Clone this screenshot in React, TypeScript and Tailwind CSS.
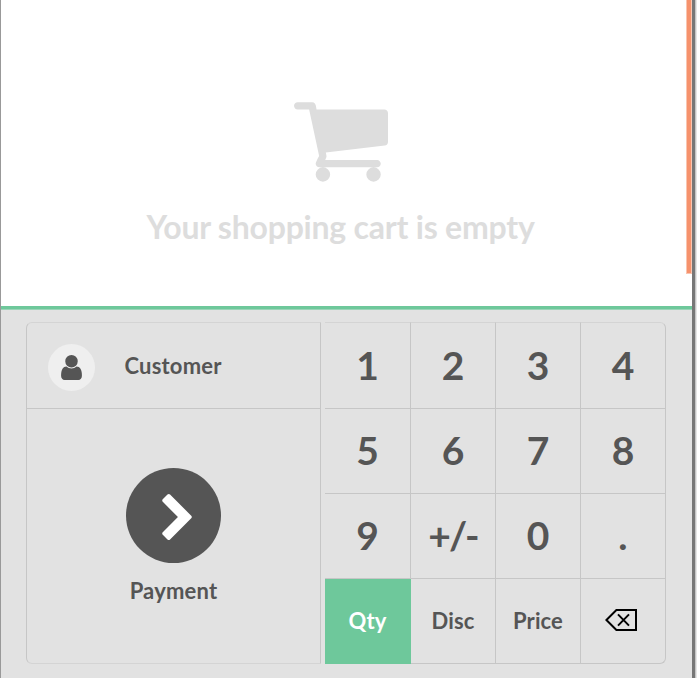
import React from 'react';

const CartIcon = () => (
  <svg className="block h-[80px] w-[94px]" viewBox="64 256 1664 1408" fill="#dddddd">
    <path d="M704 1536q0 52-38 90t-90 38-90-38-38-90 38-90 90-38 90 38 38 90zm896 0q0 52-38 90t-90 38-90-38-38-90 38-90 90-38 90 38 38 90zm128-1088v512q0 24-16.5 42.5t-40.5 21.5l-1044 122q13 60 13 70 0 16-24 64h920q26 0 45 19t19 45-19 45-45 19h-1024q-26 0-45-19t-19-45q0-11 8-31.5t16-36 21.5-40 15.5-29.5l-177-823h-204q-26 0-45-19t-19-45 19-45 45-19h256q16 0 28.5 6.5t19.5 15.5 13 24.5 8 26 5.5 29.5 4.5 26h1201q26 0 45 19t19 45z" />
  </svg>
);

const UserIcon = () => (
  <svg className="block h-[25px] w-[21px]" viewBox="256 128 1280 1536" fill="#555555">
    <path d="M1536 1399q0 109-62.5 187t-150.5 78h-854q-88 0-150.5-78t-62.5-187q0-85 8.5-160.5t31.5-152 58.5-131 94-89 134.5-34.5q131 128 313 128t313-128q76 0 134.5 34.5t94 89 58.5 131 31.5 152 8.5 160.5zm-256-887q0 159-112.5 271.5t-271.5 112.5-271.5-112.5-112.5-271.5 112.5-271.5 271.5-112.5 271.5 112.5 112.5 271.5z" />
  </svg>
);

const ChevronIcon = () => (
  <svg className="mt-[2px] ml-[7px] block h-[46px] w-[30px]" viewBox="346 26 1036 1612" fill="#ffffff">
    <path d="M1363 877l-742 742q-19 19-45 19t-45-19l-166-166q-19-19-19-45t19-45l531-531-531-531q-19-19-19-45t19-45l166-166q19-19 45-19t45 19l742 742q19 19 19 45t-19 45z" />
  </svg>
);

const BackspaceIcon = () => (
  <svg className="-mt-[2px] -ml-[5px] block h-[22px] w-[32px]" viewBox="0 0 32 22" fill="none" stroke="#000000" strokeWidth="2">
    <path d="M11.4 1H31v20H11.4L1.4 11z" />
    <path d="M13 5.4 24 16.6M24 5.4 13 16.6" />
  </svg>
);

const keys = ['1', '2', '3', '4', '5', '6', '7', '8', '9', '+/-', '0', '.', 'Qty', 'Disc', 'Price', 'back'];

function keyStyle(label: string, i: number) {
  const size = i < 12 ? 'text-[39px] pb-[1px]' : 'text-[22px] tracking-[0.1px]';
  const look = label === 'Qty' ? 'bg-[#6ec89b] text-white border-[#6ec89b]' : 'border-[#c6c6c6] text-[#555555]';
  const corner = i === 3 ? 'rounded-tr-[6px]' : i === 15 ? 'rounded-br-[6px]' : '';
  const top = i < 4 ? 'border-t border-t-[#d4d4d4]' : '';
  const tracking = label === '+/-' ? 'tracking-[-2px]' : '';
  return `${size} ${look} ${corner} ${top} ${tracking}`;
}

export default function App() {
  return (
    <div className="flex h-[678px] w-[697px] overflow-hidden bg-white font-['Lato',sans-serif] font-bold text-[#555555]">
      <div className="w-px bg-[#999999]" />
      <div className="flex w-[691px] flex-col">
        <div className="flex h-[306px] justify-between">
          <div className="flex w-[679px] flex-col items-center pt-[101.5px]">
            <CartIcon />
            <p className="mt-[25.5px] text-[32px] leading-[40px] tracking-[-0.22px] whitespace-nowrap text-[#dddddd]">Your shopping cart is empty</p>
          </div>
          <div className="h-[274px] w-[6px] border-x border-b border-[#fac5b0] bg-[#f6926c]" />
        </div>
        <div className="h-[4px] border-b border-[#9bd5b8] bg-[#6ec89b]" />
        <div className="flex h-[368px] gap-[4px] bg-[#e2e2e2] pt-[12px] pl-[25px]">
          <div className="flex h-[342px] w-[295px] flex-col rounded-l-[6px] border border-[#c6c6c6] border-t-[#d4d4d4] border-b-[#d4d4d4]">
            <button className="flex h-[86px] items-center border-b border-[#c6c6c6] pl-[21px]">
              <span className="mt-[4px] flex size-[47px] items-center justify-center rounded-full bg-[#efefef]">
                <UserIcon />
              </span>
              <span className="ml-[29.5px] text-[22px] leading-[28px] tracking-[0.2px]">Customer</span>
            </button>
            <button className="flex flex-1 flex-col items-center pt-[59px]">
              <span className="flex size-[95px] items-center justify-center rounded-full bg-[#555555]">
                <ChevronIcon />
              </span>
              <span className="mt-[14px] text-[22px] leading-[28px] tracking-[0.2px]">Payment</span>
            </button>
          </div>
          <div className="grid h-[342px] grid-cols-[86px_85px_85px_85px] grid-rows-[87px_85px_85px_85px]">
            {keys.map((label, i) => (
              <button key={label} className={`flex items-center justify-center border-r border-b leading-none ${keyStyle(label, i)}`}>
                {label === 'back' ? <BackspaceIcon /> : label}
              </button>
            ))}
          </div>
        </div>
      </div>
      <div className="w-[3px] bg-[#777777]" />
      <div className="w-px bg-[#c4c4c4]" />
      <div className="w-px bg-[#e6e6e6]" />
    </div>
  );
}
